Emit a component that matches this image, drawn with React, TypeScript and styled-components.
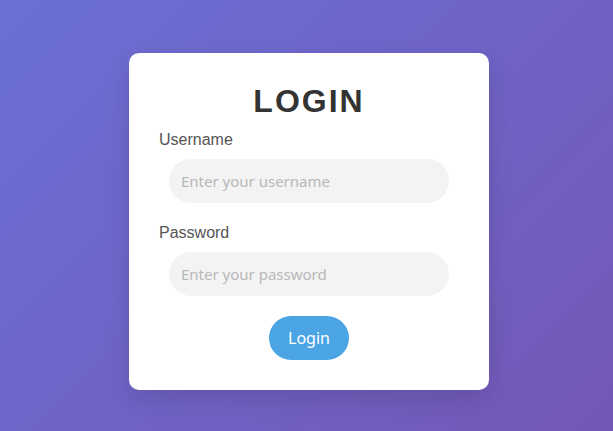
import React, { useState } from "react";
import styled, { createGlobalStyle } from "styled-components";

const GlobalStyle = createGlobalStyle`
  html, body {
    margin: 0;
    padding: 0;
  }
  body {
    font-family: "Liberation Sans", Arial, sans-serif;
  }
`;

const Page = styled.div`
  min-height: 100vh;
  box-sizing: border-box;
  display: flex;
  justify-content: center;
  align-items: flex-start;
  padding: 53px 0 0 5px;
  background: linear-gradient(135deg, #6a70d6 0%, #7457b5 100%);
`;

const Card = styled.form`
  width: 360px;
  box-sizing: border-box;
  padding: 30px;
  background: #ffffff;
  border-radius: 10px;
  box-shadow: 0 10px 25px rgba(0, 0, 0, 0.12);
  display: flex;
  flex-direction: column;
`;

const Title = styled.h2`
  margin: 0 0 10px;
  text-align: center;
  font-size: 32px;
  font-weight: 700;
  letter-spacing: 2px;
  color: #333333;
`;

const Label = styled.label`
  display: block;
  margin-bottom: 10px;
  font-size: 16px;
  line-height: 19px;
  color: #555555;
`;

const Input = styled.input`
  width: 280px;
  height: 44px;
  box-sizing: border-box;
  margin: 0 auto 20px;
  padding: 0 12px;
  border: none;
  border-radius: 22px;
  background: #f3f3f3;
  font-family: "Noto Sans", sans-serif;
  font-size: 15px;
  color: #333333;
  outline: none;

  &::placeholder {
    color: #b8b8b8;
  }
`;

const Button = styled.button`
  align-self: center;
  width: 80px;
  height: 44px;
  border: none;
  border-radius: 22px;
  background: #4ba4e3;
  color: #ffffff;
  font-family: "Noto Sans", sans-serif;
  font-size: 16px;
  cursor: pointer;
`;

const App: React.FC = () => {
  const [username, setUsername] = useState("");
  const [password, setPassword] = useState("");

  return (
    <>
      <GlobalStyle />
      <Page>
        <Card onSubmit={(e) => e.preventDefault()}>
          <Title>LOGIN</Title>
          <Label htmlFor="username">Username</Label>
          <Input
            id="username"
            type="text"
            placeholder="Enter your username"
            value={username}
            onChange={(e) => setUsername(e.target.value)}
          />
          <Label htmlFor="password">Password</Label>
          <Input
            id="password"
            type="password"
            placeholder="Enter your password"
            value={password}
            onChange={(e) => setPassword(e.target.value)}
          />
          <Button type="submit">Login</Button>
        </Card>
      </Page>
    </>
  );
};

export default App;
